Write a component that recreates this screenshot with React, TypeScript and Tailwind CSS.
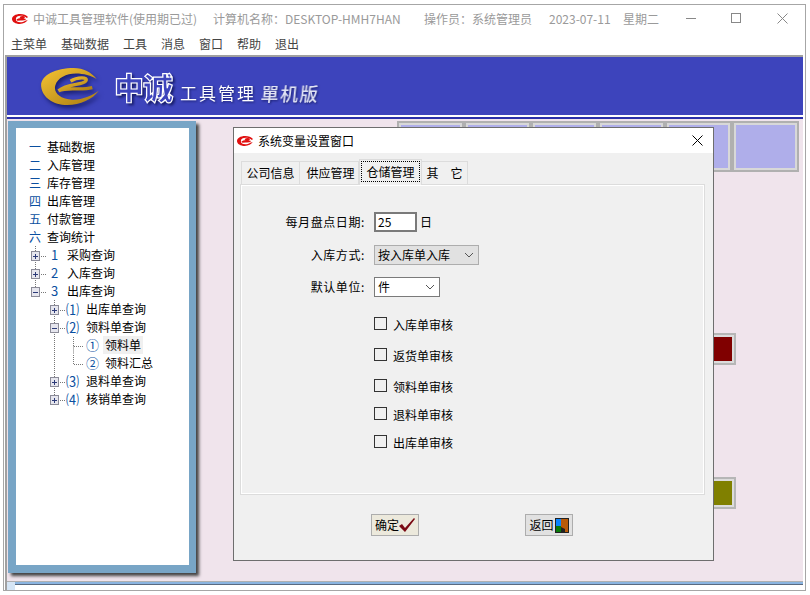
import React from "react";

const FONT = "font-['Noto_Sans_CJK_SC','Noto_Sans',sans-serif]";

function Logo({ className, color, end, small, id }: { className: string; color: string; end: string; small?: boolean; id: string }) {
  return (
    <svg viewBox={small ? "0 0 58 36" : "2 1 53 34"} className={className}>
      <defs>
        <linearGradient id={id} x1="0" y1="0" x2="1" y2="1">
          <stop offset="0" stopColor={color} />
          <stop offset="1" stopColor={end} />
        </linearGradient>
      </defs>
      {small ? (
        <path d="M30 0C12 0 0 8 0 18C0 29 13 36 28 36C42 36 52 30 57 22L48 24C42 29 36 30 30 30C20 30 14 26 14 18C14 10 22 6 32 6C40 6 47 8 54 14L58 11C52 4 42 0 30 0Z" fill={color} />
      ) : (
        <path
          d="M32 1C15 1 1 8 2 18C3 28 13 35 26 35C38 35 49 30 55 22C48 27 38 31 29 30C20 29 13 24 15 17C17 10 25 6 34 6C41 6 48 8 53 11C48 5 41 1 32 1Z"
          fill={`url(#${id})`}
        />
      )}
      <path
        d="M29 13C35 9 46 9 43 13C40 17 26 15 18 22C26 18 38 22 49 19"
        fill="none"
        stroke={small ? color : `url(#${id})`}
        strokeWidth={small ? 6 : 3}
      />
    </svg>
  );
}

function Box({ x, open }: { x: number; open?: boolean }) {
  return (
    <g>
      <rect x={x + 0.5} y={5.5} width={8} height={9} fill="#e6e6ee" stroke="#8b8b98" />
      <path d={`M${x + 2} 10.5H${x + 7}`} stroke="#2c3a78" />
      {!open && <path d={`M${x + 4.5} 8V13`} stroke="#2c3a78" />}
    </g>
  );
}

const dot = { stroke: "#777", strokeDasharray: "1 1", fill: "none" };

function Row({ children }: { children: React.ReactNode }) {
  return <div className="flex h-[18px] items-center text-xs leading-[18px] text-black">{children}</div>;
}

function Top({ n, label }: { n: string; label: string }) {
  return (
    <Row>
      <span className="w-[18px] text-[#0a4fa0]">{n}</span>
      <span>{label}</span>
    </Row>
  );
}

function L1({ n, label, open, last }: { n: string; label: string; open?: boolean; last?: boolean }) {
  return (
    <Row>
      <svg width="22" height="18" className="shrink-0">
        <path d={`M6.5 0V${last ? 5 : 18}`} {...dot} />
        <path d="M12 10.5H18" {...dot} />
        <Box x={2} open={open} />
      </svg>
      <span className="w-[16px] text-[13px] text-[#0a4fa0]">{n}</span>
      <span>{label}</span>
    </Row>
  );
}

function L2({ n, label, open, last }: { n: string; label: string; open?: boolean; last?: boolean }) {
  return (
    <Row>
      <svg width="37" height="18" className="shrink-0">
        <path d={`M25.5 0V${last ? 5 : 18}`} {...dot} />
        <path d="M31 10.5H37" {...dot} />
        <Box x={21} open={open} />
      </svg>
      <span className="w-[20px] text-[13px] text-[#0a4fa0]">{n}</span>
      <span>{label}</span>
    </Row>
  );
}

function L3({ n, label, first, selected }: { n: string; label: string; first?: boolean; selected?: boolean }) {
  return (
    <Row>
      <svg width="57" height="18" className="shrink-0">
        <path d="M25.5 0V18" {...dot} />
        <path d="M44.5 -1V10.5H55" {...dot} />
        {first && <path d="M44.5 10.5V18" {...dot} />}
      </svg>
      <span className="w-[17px] text-[13px] text-[#0a4fa0]">{n}</span>
      <span className={`px-[2px] ${selected ? "bg-[#f0f0f0]" : ""}`}>{label}</span>
    </Row>
  );
}

function Tile({ className }: { className: string }) {
  return (
    <div className={`absolute h-[51px] w-[67px] border-2 border-[#b0b0b0] ${className}`}>
      <div className="h-full w-full border-2 border-[#d8d8d8] bg-[#afaeea]" />
    </div>
  );
}

function Check({ label, className }: { label: string; className: string }) {
  return (
    <div className={`flex items-start ${className}`}>
      <span className="h-[13px] w-[13px] border border-[#333] bg-[#f0f0f0]" />
      <span className="ml-[6px] mt-[1px] text-xs leading-[14px] text-black">{label}</span>
    </div>
  );
}

function Chevron() {
  return (
    <svg width="10" height="6" viewBox="0 0 10 6">
      <path d="M1 1L5 5L9 1" fill="none" stroke="#555" />
    </svg>
  );
}

function Tab({ label, active, last }: { label: string; active?: boolean; last?: boolean }) {
  if (active) {
    return (
      <div className="relative z-10 -mt-[2px] -mb-[1px] h-[26px] w-[63px] border-x border-t border-[#dcdcdc] bg-[#f0f0f0] p-[1px]">
        <div className="flex h-[21px] items-center justify-center border border-dotted border-black text-xs text-black">{label}</div>
      </div>
    );
  }
  return (
    <div
      className={`flex h-[23px] items-center justify-center border-t border-r border-[#dcdcdc] text-xs text-black ${
        last ? "w-[46px]" : "w-[59px]"
      } ${label === "公司信息" ? "border-l" : ""} ${label === "供应管理" ? "pl-[3px]" : ""}`}
    >
      {label}
    </div>
  );
}

function FormLabel({ children }: { children: React.ReactNode }) {
  return <span className="w-[123px] text-right text-xs tracking-[0.6px] text-black">{children}</span>;
}

export default function App() {
  return (
    <div className={`relative h-[595px] w-[810px] overflow-hidden bg-white ${FONT}`}>
      <div className="ml-[3px] mt-[4px] flex h-[587px] w-[803px] flex-col border border-[#a6a6a6] bg-white">
        {/* title bar */}
        <div className="flex h-[27px] shrink-0 items-center whitespace-nowrap pl-[8px] text-xs text-[#9a9a9a]">
          <Logo className="h-[10px] w-[16px]" color="#e01010" end="#e01010" small id="l1" />
          <span className="ml-[5px] w-[164px]">中诚工具管理软件(使用期已过)</span>
          <span className="ml-[16px] w-[196px]">计算机名称：DESKTOP-HMH7HAN</span>
          <span className="ml-[15px] w-[109px]">操作员：系统管理员</span>
          <span className="ml-[16px] w-[65px]">2023-07-11</span>
          <span className="ml-[9px] w-[36px]">星期二</span>
          <svg width="11" height="11" className="ml-[27px]"><path d="M0 5.5H10" stroke="#888" /></svg>
          <svg width="11" height="11" className="ml-[34px]"><rect x="0.5" y="0.5" width="9" height="9" fill="none" stroke="#888" /></svg>
          <svg width="11" height="11" className="ml-[35px]"><path d="M0.5 0.5L10.5 10.5M10.5 0.5L0.5 10.5" stroke="#888" /></svg>
        </div>
        {/* menu */}
        <div className="flex h-[23px] shrink-0 items-center gap-[14px] pl-[7px] text-xs text-[#444]">
          <span>主菜单</span>
          <span>基础数据</span>
          <span>工具</span>
          <span>消息</span>
          <span>窗口</span>
          <span>帮助</span>
          <span>退出</span>
        </div>
        {/* client */}
        <div className="ml-[1px] mr-[2px] flex flex-1 flex-col border-l-2 border-t-2 border-[#a0a0a0]">
          {/* banner */}
          <div className="flex h-[58px] shrink-0 items-center bg-[#3d44bc] pl-[34px]">
            <Logo className="h-[37px] w-[58px] drop-shadow-[2px_3px_2px_#1a1f70]" color="#f6c433" end="#a87a12" id="l2" />
            <span className="ml-[15px] text-[30px] font-black leading-none tracking-[-1px] text-[#3d44bc] [-webkit-text-stroke:1.2px_white] drop-shadow-[2px_2px_1px_#1a1f70]">中诚</span>
            <span className="ml-[8px] mt-[13px] text-[17px] leading-none tracking-[2px] text-white drop-shadow-[1px_1px_1px_#1a1f70]">工具管理</span>
            <span className="ml-[5px] mt-[13px] -skew-x-6 text-[18px] font-medium leading-none tracking-[1.5px] text-[#e4e6f6] drop-shadow-[1px_1px_1px_#1a1f70]">單机版</span>
          </div>
          <div className="h-[2px] shrink-0 bg-white" />
          <div className="h-[2px] shrink-0 bg-[#2a2fa8]" />
          {/* desk */}
          <div className="relative flex-1 bg-[#f0e4ec] pl-[1px] pt-[2px]">
            <div className="h-[452px] w-[188px] border-8 border-t-[7px] border-r-[7px] border-[#78a5c6] bg-white pl-[13px] pt-[10px] shadow-[3px_3px_3px_#444]">
              <Top n="一" label="基础数据" />
              <Top n="二" label="入库管理" />
              <Top n="三" label="库存管理" />
              <Top n="四" label="出库管理" />
              <Top n="五" label="付款管理" />
              <Top n="六" label="查询统计" />
              <L1 n="1" label="采购查询" />
              <L1 n="2" label="入库查询" />
              <L1 n="3" label="出库查询" open last />
              <L2 n="⑴" label="出库单查询" />
              <L2 n="⑵" label="领料单查询" open />
              <L3 n="①" label="领料单" first selected />
              <L3 n="②" label="领料汇总" />
              <L2 n="⑶" label="退料单查询" />
              <L2 n="⑷" label="核销单查询" last />
            </div>
            <Tile className="left-[390px] top-[2px]" />
            <Tile className="left-[457px] top-[2px]" />
            <Tile className="left-[524px] top-[2px]" />
            <Tile className="left-[591px] top-[2px]" />
            <Tile className="left-[658px] top-[2px]" />
            <Tile className="left-[725px] top-[2px]" />
            <div className="absolute left-[679px] top-[214px] h-[32px] w-[50px] border-2 border-[#b6b6b6]">
              <div className="h-full w-full border-2 border-[#dcdcdc] bg-[#800000]" />
            </div>
            <div className="absolute left-[679px] top-[358px] h-[32px] w-[50px] border-2 border-[#b6b6b6]">
              <div className="h-full w-full border-2 border-[#dcdcdc] bg-[#808000]" />
            </div>
          </div>
          {/* status strip */}
          <div className="h-[1px] shrink-0 bg-[#b0b0b0]" />
          <div className="flex h-[3px] shrink-0">
            <div className="w-[8px] bg-[#d5e5f5]" />
            <div className="flex-1 border-b border-[#5a6a80] bg-[#8ab4e0]" />
          </div>
          <div className="flex h-[5px] shrink-0 bg-white">
            <div className="w-[8px] bg-[#d5e5f5]" />
          </div>
        </div>
      </div>

      {/* dialog */}
      <div className="absolute left-[233px] top-[127px] flex h-[434px] w-[481px] flex-col border border-[#6e6e6e] bg-[#f0f0f0]">
        <div className="flex h-[25px] shrink-0 items-center bg-white pl-[3px] pr-[10px]">
          <Logo className="h-[10px] w-[16px]" color="#e01010" end="#e01010" small id="l3" />
          <span className="ml-[5px] text-xs text-black">系统变量设置窗口</span>
          <svg width="11" height="11" className="ml-auto"><path d="M0.5 0.5L10.5 10.5M10.5 0.5L0.5 10.5" stroke="#000" /></svg>
        </div>
        <div className="ml-[7px] mt-[8px] flex h-[23px] shrink-0 items-end">
          <Tab label="公司信息" />
          <Tab label="供应管理" />
          <Tab label="仓储管理" active />
          <Tab label="其　它" last />
        </div>
        <div className="ml-[6px] h-[311px] w-[465px] shrink-0 border border-[#dcdcdc]">
          <div className="h-full w-full border border-white pt-[26px]">
            <div className="flex h-[20px] items-center">
              <FormLabel>每月盘点日期:</FormLabel>
              <span className="ml-[9px] flex h-[20px] w-[43px] items-center border-2 border-[#7a7a7a] bg-white pl-[2px] text-xs text-black">25</span>
              <span className="ml-[3px] text-xs text-black">日</span>
            </div>
            <div className="mt-[13px] flex h-[20px] items-center">
              <FormLabel>入库方式:</FormLabel>
              <span className="ml-[9px] flex h-[20px] w-[105px] items-center justify-between border border-[#adadad] bg-[#e1e1e1] pl-[3px] pr-[4px] text-xs text-black">
                按入库单入库
                <Chevron />
              </span>
            </div>
            <div className="mt-[12px] flex h-[20px] items-center">
              <FormLabel>默认单位:</FormLabel>
              <span className="ml-[9px] flex h-[20px] w-[66px] items-center justify-between border border-[#7a7a7a] bg-white pl-[3px] pr-[4px] text-xs text-black">
                件
                <Chevron />
              </span>
            </div>
            <div className="ml-[132px]">
              <Check label="入库单审核" className="mt-[20px]" />
              <Check label="返货单审核" className="mt-[16px]" />
              <Check label="领料单审核" className="mt-[16px]" />
              <Check label="退料单审核" className="mt-[13px]" />
              <Check label="出库单审核" className="mt-[13px]" />
            </div>
          </div>
        </div>
        <div className="mt-[19px] flex pl-[137px]">
          <button className="flex h-[22px] w-[48px] items-center justify-center border border-[#adadad] bg-[#ece9dc] p-0 text-xs text-black">
            确定
            <svg width="16" height="14" viewBox="0 0 16 14">
              <path d="M0 8L3 6L6 10L15 0L16 1L6 14Z" fill="#7a0a14" />
            </svg>
          </button>
          <button className="ml-[106px] flex h-[22px] w-[48px] items-center justify-center border border-[#adadad] bg-[#e1e1e1] p-0 text-xs text-black">
            返回
            <svg width="14" height="15" viewBox="0 0 14 15" className="ml-[1px]">
              <rect width="14" height="15" fill="#222" />
              <rect x="1" y="1" width="5" height="7" fill="#0a84ff" />
              <rect x="1" y="8" width="5" height="6" fill="#0a7a0a" />
              <path d="M6 1H13V14H10V11L6 9Z" fill="#b85a08" />
            </svg>
          </button>
        </div>
      </div>
    </div>
  );
}
